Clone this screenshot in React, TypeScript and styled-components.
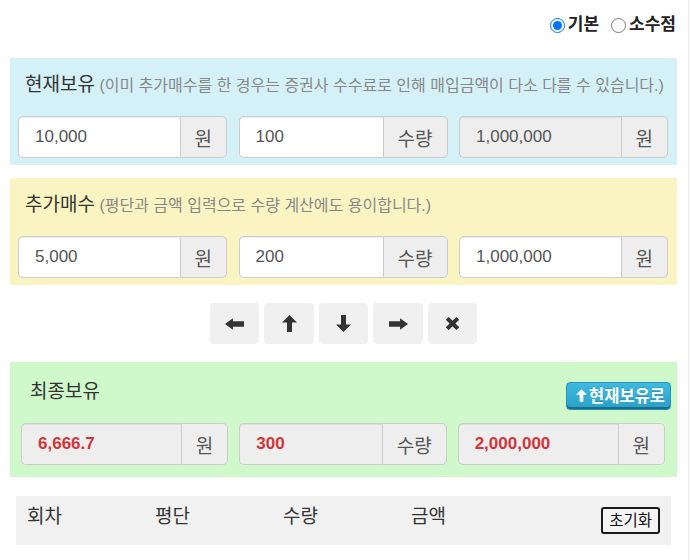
import React from "react";
import styled, { createGlobalStyle } from "styled-components";

const Global = createGlobalStyle`
  html, body { margin: 0; padding: 0; background: #fff; }
  body { font-family: "Liberation Sans", "Noto Sans CJK KR", sans-serif; color: #333; }
  * { box-sizing: border-box; }
`;

const Page = styled.div`
  width: 689px;
  min-height: 560px;
  border-right: 1px solid #ececec;
  padding: 0 11px 0 10px;
`;

const ModeRow = styled.div`
  height: 58px;
  display: flex;
  justify-content: flex-end;
  align-items: flex-start;
  padding-top: 14px;
  padding-right: 1px;
  gap: 12px;
`;

const ModeLabel = styled.label`
  display: inline-flex;
  align-items: center;
  font-size: 17px;
  line-height: 22px;
  font-weight: bold;
  color: #222;
  input {
    margin: 0 3px 0 0;
    width: 15px;
    height: 15px;
  }
`;

const tones = {
  blue: "#d4f1f8",
  yellow: "#faf4c3",
  green: "#d0f9cb",
};

const Panel = styled.section<{ $tone: keyof typeof tones; $green?: boolean }>`
  background: ${(p) => tones[p.$tone]};
  padding: ${(p) => (p.$green ? "20px 6px 12px 11px" : "14px 9px 7px 8px")};
`;

const Heading = styled.div`
  padding-left: 7px;
  height: 24px;
  line-height: 26px;
  margin-bottom: 20px;
  white-space: nowrap;
`;

const Title = styled.span`
  font-size: 19px;
  color: #333;
`;

const Note = styled.span`
  font-size: 16px;
  color: #888;
`;

const Fields = styled.div<{ $gap: number; $padRight?: number }>`
  display: grid;
  grid-template-columns: repeat(3, minmax(0, 1fr));
  gap: ${(p) => p.$gap}px;
  padding-right: ${(p) => p.$padRight ?? 0}px;
`;

const Group = styled.div`
  display: flex;
  height: 42px;
  min-width: 0;
`;

const Field = styled.input<{ $locked?: boolean; $result?: boolean }>`
  flex: 1 1 0;
  width: 100%;
  min-width: 0;
  height: 100%;
  padding: 0 16px;
  border: 1px solid #ccc;
  border-right: none;
  border-radius: 5px 0 0 5px;
  background: ${(p) => (p.$locked ? "#eeeeee" : "#ffffff")};
  box-shadow: inset 0 1px 1px rgba(0, 0, 0, 0.075);
  font-family: "Liberation Sans", "Noto Sans CJK KR", sans-serif;
  font-size: 17px;
  font-weight: ${(p) => (p.$result ? "bold" : "normal")};
  color: ${(p) => (p.$result ? "#d3343a" : "#555")};
  outline: none;
`;

const Addon = styled.span`
  flex: none;
  display: flex;
  align-items: center;
  padding: 0 14px;
  background: #eeeeee;
  border: 1px solid #ccc;
  border-radius: 0 5px 5px 0;
  font-size: 19px;
  color: #555;
`;

const Pad = styled.div`
  display: flex;
  justify-content: center;
  gap: 5px;
  margin: 18px 0;
`;

const PadButton = styled.button`
  width: 49.5px;
  height: 41px;
  border: none;
  border-radius: 4px;
  background: #f0f0f0;
  display: flex;
  align-items: center;
  justify-content: center;
  padding: 0;
  svg { display: block; }
`;

const FinalHead = styled.div`
  display: flex;
  justify-content: space-between;
  align-items: flex-start;
  padding-left: 9px;
  margin-bottom: 13px;
`;

const FinalTitle = styled.span`
  font-size: 19px;
  line-height: 20px;
  color: #333;
`;

const InfoButton = styled.button`
  height: 28px;
  display: flex;
  align-items: center;
  gap: 2px;
  padding: 0 5px 2px 9px;
  border: 1px solid #2592b7;
  border-radius: 4px;
  background: linear-gradient(#40b9df, #2aa0c8);
  box-shadow: inset 0 -2px 0 #1b6c88;
  color: #fff;
  font-family: "Liberation Sans", "Noto Sans CJK KR", sans-serif;
  font-size: 16.5px;
  font-weight: bold;
  text-shadow: 0 -1px 0 rgba(0, 0, 0, 0.15);
`;

const History = styled.div`
  margin: 19px 6px 0 6px;
  height: 49px;
  background: #f1f1f1;
  padding: 9px 11px 0 11px;
  display: grid;
  grid-template-columns: repeat(4, 128px) 1fr auto;
  align-items: start;
`;

const HistoryCell = styled.span`
  font-size: 19px;
  line-height: 24px;
  color: #333;
`;

const ResetButton = styled.button`
  grid-column: 6;
  margin-top: 2px;
  height: 27px;
  padding: 0 6px;
  border: 2px solid #1a1a1a;
  border-radius: 3px;
  background: #f4f4f4;
  font-family: "Liberation Sans", "Noto Sans CJK KR", sans-serif;
  font-size: 15.5px;
  line-height: 1;
  color: #111;
`;

const ArrowLeft = () => (
  <svg width="19" height="12" viewBox="0 0 18 11">
    <polygon points="0,5.5 7.5,0 7.5,3 18,3 18,8 7.5,8 7.5,11" fill="#333" />
  </svg>
);
const ArrowRight = () => (
  <svg width="19" height="12" viewBox="0 0 18 11">
    <polygon points="18,5.5 10.5,0 10.5,3 0,3 0,8 10.5,8 10.5,11" fill="#333" />
  </svg>
);
const ArrowUp = ({ color = "#333", w = 15, h = 17 }: { color?: string; w?: number; h?: number }) => (
  <svg width={w} height={h} viewBox="0 0 15 17">
    <polygon points="7.5,0 15,7.5 10,7.5 10,17 5,17 5,7.5 0,7.5" fill={color} />
  </svg>
);
const ArrowDown = () => (
  <svg width="15" height="17" viewBox="0 0 15 17">
    <polygon points="7.5,17 15,9.5 10,9.5 10,0 5,0 5,9.5 0,9.5" fill="#333" />
  </svg>
);
const Cross = () => (
  <svg width="15" height="13" viewBox="0 0 14 12">
    <path d="M2,1.2 L12,10.8 M12,1.2 L2,10.8" stroke="#333" strokeWidth="3.8" />
  </svg>
);

type Row = { price: string; qty: string; total: string; totalLocked?: boolean };

const InputRow = ({ row, gap, padRight, result }: { row: Row; gap: number; padRight?: number; result?: boolean }) => (
  <Fields $gap={gap} $padRight={padRight}>
    <Group>
      <Field defaultValue={row.price} $locked={result} $result={result} readOnly={result} />
      <Addon>원</Addon>
    </Group>
    <Group>
      <Field defaultValue={row.qty} $locked={result} $result={result} readOnly={result} />
      <Addon>수량</Addon>
    </Group>
    <Group>
      <Field defaultValue={row.total} $locked={result || row.totalLocked} $result={result} readOnly />
      <Addon>원</Addon>
    </Group>
  </Fields>
);

export default function App() {
  return (
    <>
      <Global />
      <Page>
        <ModeRow>
          <ModeLabel>
            <input type="radio" name="mode" defaultChecked />
            기본
          </ModeLabel>
          <ModeLabel>
            <input type="radio" name="mode" />
            소수점
          </ModeLabel>
        </ModeRow>

        <Panel $tone="blue">
          <Heading>
            <Title>현재보유</Title>{" "}
            <Note>(이미 추가매수를 한 경우는 증권사 수수료로 인해 매입금액이 다소 다를 수 있습니다.)</Note>
          </Heading>
          <InputRow row={{ price: "10,000", qty: "100", total: "1,000,000", totalLocked: true }} gap={11.5} />
        </Panel>

        <Panel $tone="yellow" style={{ marginTop: 13 }}>
          <Heading>
            <Title>추가매수</Title> <Note>(평단과 금액 입력으로 수량 계산에도 용이합니다.)</Note>
          </Heading>
          <InputRow row={{ price: "5,000", qty: "200", total: "1,000,000" }} gap={11.5} />
        </Panel>

        <Pad>
          <PadButton aria-label="left"><ArrowLeft /></PadButton>
          <PadButton aria-label="up"><ArrowUp /></PadButton>
          <PadButton aria-label="down"><ArrowDown /></PadButton>
          <PadButton aria-label="right"><ArrowRight /></PadButton>
          <PadButton aria-label="clear"><Cross /></PadButton>
        </Pad>

        <Panel $tone="green" $green>
          <FinalHead>
            <FinalTitle>최종보유</FinalTitle>
            <InfoButton>
              <ArrowUp color="#fff" w={11} h={15} />
              현재보유로
            </InfoButton>
          </FinalHead>
          <InputRow row={{ price: "6,666.7", qty: "300", total: "2,000,000" }} gap={11} padRight={6} result />
        </Panel>

        <History>
          <HistoryCell>회차</HistoryCell>
          <HistoryCell>평단</HistoryCell>
          <HistoryCell>수량</HistoryCell>
          <HistoryCell>금액</HistoryCell>
          <ResetButton>초기화</ResetButton>
        </History>
      </Page>
    </>
  );
}
